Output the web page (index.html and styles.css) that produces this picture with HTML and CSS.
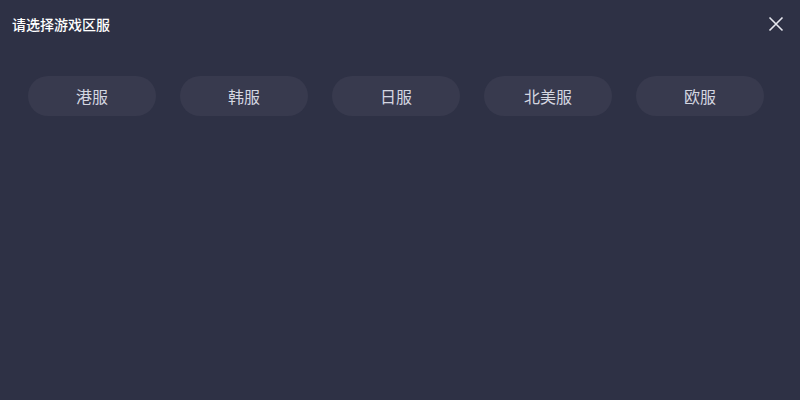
FILE: index.html
```html
<!DOCTYPE html>
<html lang="zh">
<head>
<meta charset="utf-8">
<link rel="stylesheet" href="styles.css">
</head>
<body>
<div class="dialog">
  <div class="header">
    <div class="title">请选择游戏区服</div>
    <div class="close">
      <svg width="16" height="16" viewBox="0 0 16 16"><path d="M1.5 1.5L14.5 14.5M14.5 1.5L1.5 14.5" stroke="#e6e7ee" stroke-width="1.6" fill="none"/></svg>
    </div>
  </div>
  <div class="servers">
    <div class="server">港服</div>
    <div class="server">韩服</div>
    <div class="server">日服</div>
    <div class="server">北美服</div>
    <div class="server">欧服</div>
  </div>
</div>
</body>
</html>
```
FILE: styles.css
```css
html, body {
  margin: 0;
  padding: 0;
  background: #2e3145;
  font-family: "Noto Sans CJK SC", "Noto Sans", sans-serif;
}
.dialog {
  width: 800px;
  height: 400px;
  box-sizing: border-box;
}
.header {
  display: flex;
  justify-content: space-between;
  align-items: center;
  height: 48px;
  padding: 0 16px 0 12px;
}
.title {
  color: #ffffff;
  font-size: 14px;
  font-weight: 500;
}
.close {
  display: flex;
  width: 16px;
  height: 16px;
}
.servers {
  display: flex;
  gap: 24px;
  padding: 28px 0 0 28px;
}
.server {
  width: 128px;
  height: 40px;
  border-radius: 20px;
  background: #383a4e;
  color: #d4d6e0;
  font-size: 16px;
  display: flex;
  align-items: center;
  justify-content: center;
}
```
